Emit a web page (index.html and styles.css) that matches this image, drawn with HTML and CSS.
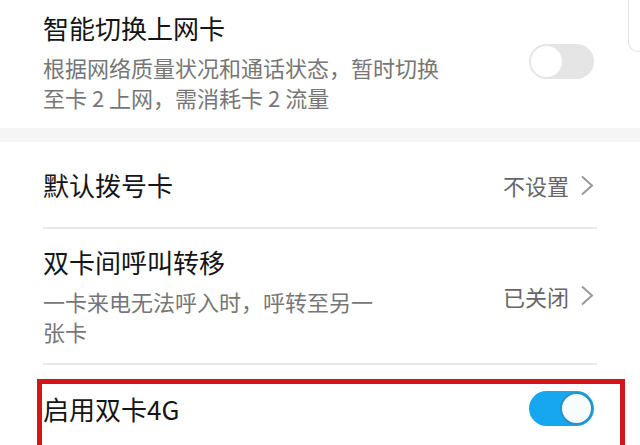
FILE: index.html
```html
<!doctype html>
<html>
<head>
    <meta charset="UTF-8">
    <title>双卡管理</title>
    <meta name="viewport" content="width=device-width, initial-scale=1.0"/>
    <link rel="stylesheet" href="styles.css">
</head>
<body>
    <div class="edge"></div>

    <div class="group">
        <div class="item item-first">
            <div class="item-text">
                <div class="title">智能切换上网卡</div>
                <div class="desc desc-wide">根据网络质量状况和通话状态，暂时切换至卡 2 上网，需消耗卡 2 流量</div>
            </div>
            <div class="switch"><span class="knob"></span></div>
        </div>
    </div>

    <div class="gap"></div>

    <div class="group">
        <div class="item item-line">
            <div class="item-text">
                <div class="title">默认拨号卡</div>
            </div>
            <div class="value">不设置<svg class="arrow" width="14" height="21" viewBox="0 0 14 21"><polyline points="2,1.5 12,10.5 2,19.5" fill="none" stroke="#999" stroke-width="2"/></svg></div>
        </div>
        <div class="item item-two item-line">
            <div class="item-text">
                <div class="title">双卡间呼叫转移</div>
                <div class="desc desc-narrow">一卡来电无法呼入时，呼转至另一张卡</div>
            </div>
            <div class="value">已关闭<svg class="arrow" width="14" height="21" viewBox="0 0 14 21"><polyline points="2,1.5 12,10.5 2,19.5" fill="none" stroke="#999" stroke-width="2"/></svg></div>
        </div>
        <div class="item item-last">
            <div class="item-text">
                <div class="title">启用双卡4G</div>
            </div>
            <div class="switch switch-on"><span class="knob"></span></div>
        </div>
    </div>

    <div class="mark"></div>
</body>
</html>
```

FILE: styles.css
```css
* { margin: 0; padding: 0; box-sizing: border-box; }
body { background: #fff; font-family: "Noto Sans CJK SC", "Noto Sans", sans-serif; color: #151515; overflow: hidden; height: 445px; position: relative; }

.group { padding: 0 43px; background: #fff; }
.gap { height: 14px; background: #f5f5f5; }

.item { display: flex; align-items: center; padding: 26px 0 25px; }
.item-first { padding: 11px 0 16px; }
.item-two { padding: 16px 0 17px; }
.item-last { padding-bottom: 20px; }
.item-line { border-bottom: 2px solid #e9e9e9; }
.item-text { flex: 1; }

.title { font-size: 26px; line-height: 34px; }
.desc { font-size: 22px; line-height: 30px; color: #767676; margin-top: 7px; }
.desc-wide { max-width: 404px; }
.desc-narrow { max-width: 345px; }

.value { display: flex; align-items: center; font-size: 22px; line-height: 30px; color: #666; margin-right: 3px; }
.arrow { display: block; margin-left: 11px; }

.switch { width: 65px; height: 35px; border-radius: 18px; background: #e5e5e5; margin-right: 3px; padding: 2px; display: flex; }
.switch .knob { width: 31px; height: 31px; border-radius: 50%; background: #fff; }
.switch-on { background: #17a6f0; justify-content: flex-end; padding: 1px; }
.switch-on .knob { width: 33px; height: 33px; border: 2px solid #2b91c3; background: #f7fcff; }

/* 截图上的红框标注 */
.mark { position: absolute; left: 37px; top: 379px; width: 588px; height: 66px; border: 5px solid #d3161c; border-bottom: 0; }

/* 右上角浮层边缘 */
.edge { position: absolute; left: 628px; top: -12px; width: 12px; height: 64px; border: 1.5px solid #e3e3e3; border-right: 0; border-radius: 10px 0 0 10px; }
```
